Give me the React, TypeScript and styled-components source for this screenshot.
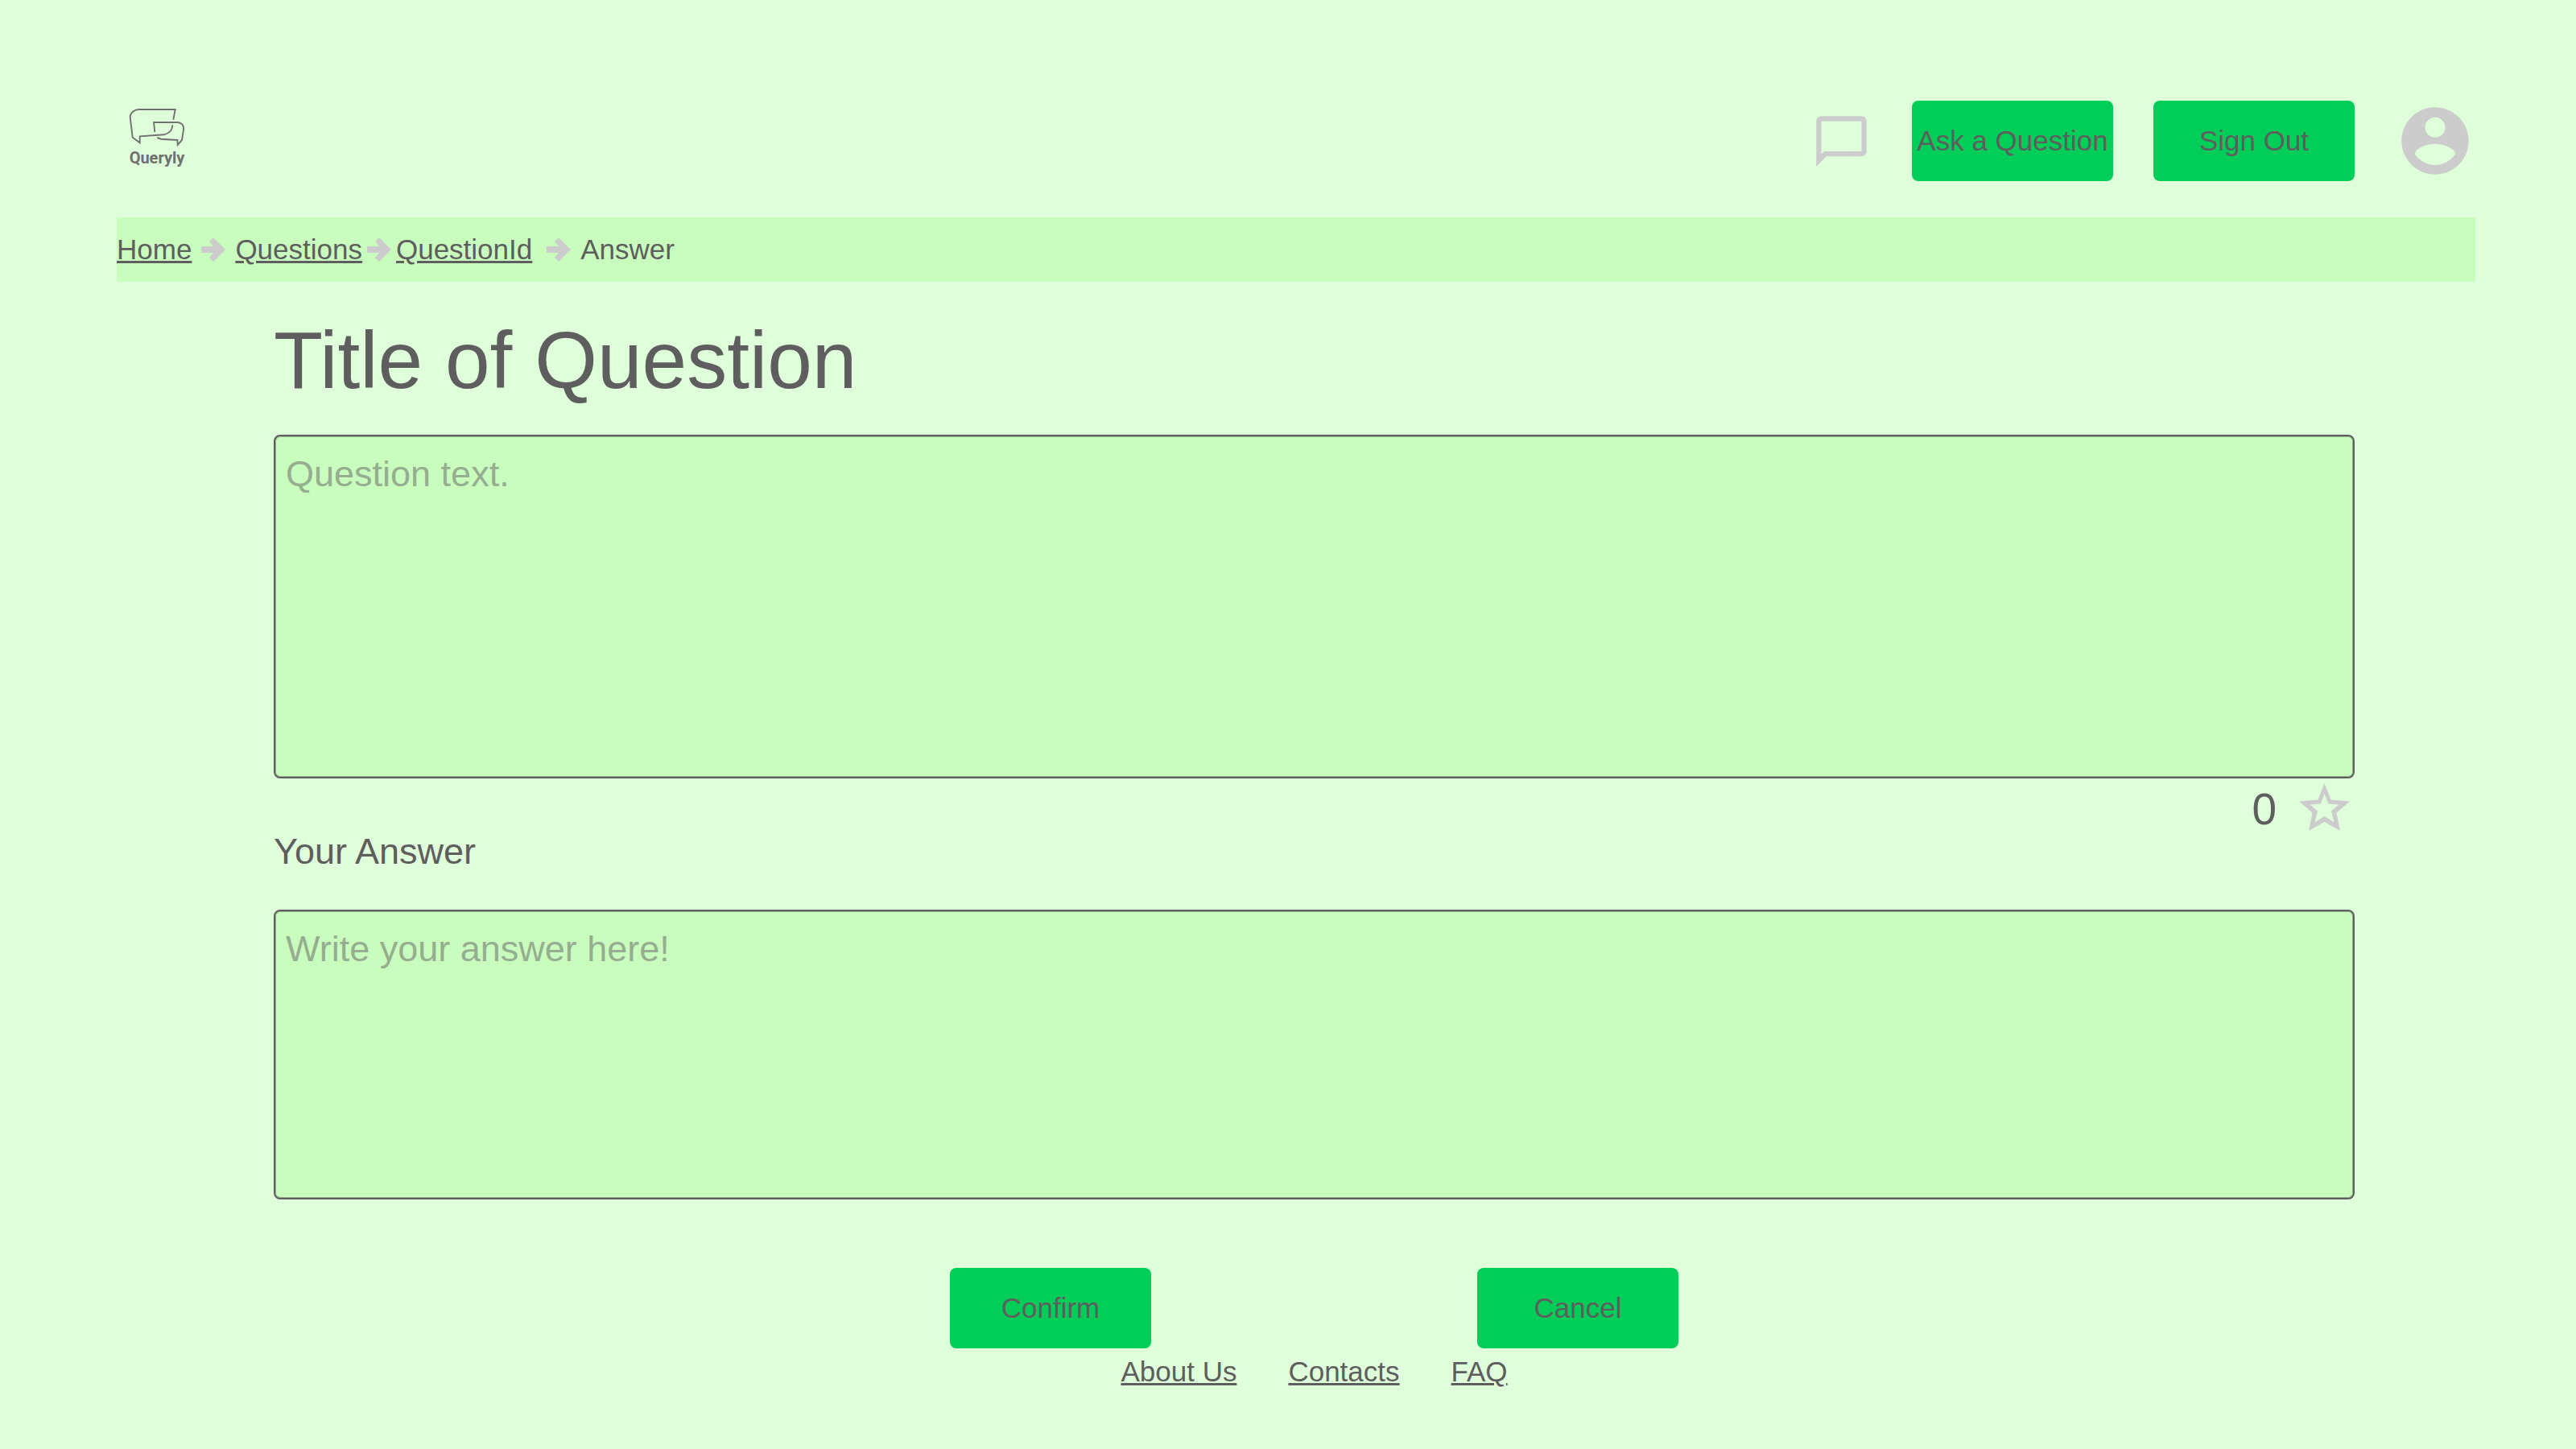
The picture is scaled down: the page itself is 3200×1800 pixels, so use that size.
import React from 'react';
import styled, { createGlobalStyle } from 'styled-components';

const ink = '#5e5e5e';
const panel = '#c9fdbe';
const muted = '#cccccc';

const GlobalStyle = createGlobalStyle`
  * { box-sizing: border-box; }
  body {
    margin: 0;
    background: #dfffda;
    color: ${ink};
    font-family: "Liberation Sans", Arial, sans-serif;
    font-size: 35px;
    line-height: 40px;
  }
`;

const Page = styled.div`
  padding: 125px 125px 60px 145px;
`;

const Header = styled.header`
  display: flex;
  align-items: center;
  gap: 50px;
  height: 100px;
  margin-bottom: 45px;
`;

const Logo = styled.a`
  display: flex;
  flex-direction: column;
  align-items: center;
  width: 100px;
  margin-right: auto;
  padding-bottom: 8px;
  color: #707070;
  font-family: Roboto, sans-serif;
  font-size: 20px;
  font-weight: 700;
  line-height: 24px;
  text-decoration: none;
`;

const IconButton = styled.button`
  display: flex;
  padding: 0;
  border: 0;
  background: none;
  color: ${muted};
`;

const Button = styled.button`
  width: 250px;
  height: 100px;
  padding: 0;
  border: 0;
  border-radius: 8px;
  background: #00ce58;
  color: ${ink};
  font: inherit;
  white-space: nowrap;
`;

const Breadcrumb = styled.nav`
  display: flex;
  align-items: center;
  height: 80px;
  background: ${panel};
`;

const Link = styled.a`
  color: inherit;
  text-decoration: underline;
  text-decoration-thickness: 3px;
`;

const ArrowIcon = styled.svg<{ $before: number; $after: number }>`
  flex: none;
  width: 30px;
  height: 30px;
  margin-left: ${(p) => p.$before}px;
  margin-right: ${(p) => p.$after}px;
  fill: ${muted};
`;

const Main = styled.main`
  padding: 0 150px 0 195px;
`;

const Title = styled.h1`
  margin: 40px 0 35px;
  font-size: 100px;
  font-weight: 400;
  line-height: 115px;
`;

const TextBox = styled.textarea<{ $height: number }>`
  display: block;
  width: 100%;
  height: ${(p) => p.$height}px;
  padding: 21px 13px;
  border: 2px solid ${ink};
  border-radius: 8px;
  background: ${panel};
  box-shadow: inset 0 0 0 1px #94ae8e;
  color: ${ink};
  font: inherit;
  font-size: 45px;
  line-height: 52px;
  resize: none;
  &::placeholder {
    color: #95ae8f;
    opacity: 1;
  }
`;

const Votes = styled.div`
  display: flex;
  justify-content: flex-end;
  align-items: center;
  gap: 22px;
  height: 75px;
  font-size: 55px;
`;

const AnswerLabel = styled.label`
  display: block;
  margin: -10px 0 46px;
  font-size: 45px;
  line-height: 52px;
`;

const Actions = styled.div`
  display: flex;
  justify-content: center;
  gap: 405px;
  margin-top: 85px;
`;

const Footer = styled.footer`
  display: flex;
  justify-content: center;
  gap: 64px;
  padding: 9px 150px 0 195px;
`;

const Arrow = ({ before, after }: { before: number; after: number }) => (
  <ArrowIcon viewBox="0 0 30 30" $before={before} $after={after} aria-hidden="true">
    <path d="M0 11H15L10 5L15 0L30 15L15 30L10 25L15 19H0Z" />
  </ArrowIcon>
);

export default function App() {
  return (
    <>
      <GlobalStyle />
      <Page>
        <Header>
          <Logo href="#">
            <svg width="70" height="50" viewBox="0 0 70 50" fill="none" stroke="currentColor" strokeWidth="1.9">
              <path d="M55.300 14.700L57.700 2H12Q8.500 2 5.500 4.500Q1.300 8 1.700 12L4.700 36.700L13.700 43.300V35.300L43.700 33.300Q49 32 52 28.500Q54.300 25.500 54.300 21.300" />
              <path d="M32.300 30L31 18H60Q63.500 18 65.700 20Q68.500 22.500 68 27L66 40L60.700 46L60.300 40L40 38.700L35.300 37" />
            </svg>
            Queryly
          </Logo>
          <IconButton aria-label="Messages">
            <svg width="75" height="75" viewBox="0 0 24 24" fill="currentColor">
              <path d="M4 4h16v12H5.170L4 17.170V4m0-2c-1.100 0-1.990.9-1.990 2L2 22l4-4h14c1.100 0 2-.9 2-2V4c0-1.100-.9-2-2-2H4z" />
            </svg>
          </IconButton>
          <Button>Ask a Question</Button>
          <Button>Sign Out</Button>
          <IconButton aria-label="Account">
            <svg width="100" height="100" viewBox="0 0 24 24" fill="currentColor">
              <path d="M12 2C6.480 2 2 6.480 2 12s4.480 10 10 10 10-4.480 10-10S17.520 2 12 2zm0 3c1.660 0 3 1.340 3 3s-1.340 3-3 3-3-1.340-3-3 1.340-3 3-3zm0 14.200c-2.500 0-4.710-1.280-6-3.220.03-1.990 4-3.080 6-3.080 1.990 0 5.970 1.090 6 3.080-1.290 1.940-3.500 3.220-6 3.220z" />
            </svg>
          </IconButton>
        </Header>
        <Breadcrumb aria-label="Breadcrumb">
          <Link href="#">Home</Link>
          <Arrow before={12} after={12} />
          <Link href="#">Questions</Link>
          <Arrow before={6} after={6} />
          <Link href="#">QuestionId</Link>
          <Arrow before={18} after={12} />
          <span>Answer</span>
        </Breadcrumb>
        <Main>
          <Title>Title of Question</Title>
          <TextBox $height={427} aria-label="Question" placeholder="Question text." />
          <Votes>
            <span>0</span>
            <IconButton aria-label="Star this question">
              <svg width="75" height="75" viewBox="0 0 75 75" fill="currentColor" fillRule="evenodd">
                <path d="M37.500 6L45.500 26.500L69 28.500L52.500 42.500L57 65L37.500 54L18 65L22.500 42.500L6 28.500L29.500 26.500ZM37.500 19L32.700 31.500L19.500 32.500L29 40.500L25.500 54.500L37.500 47L49.500 54.500L46 40.500L55.500 32.500L42.300 31.500Z" />
              </svg>
            </IconButton>
          </Votes>
          <AnswerLabel htmlFor="answer">Your Answer</AnswerLabel>
          <TextBox id="answer" $height={360} placeholder="Write your answer here!" />
          <Actions>
            <Button>Confirm</Button>
            <Button>Cancel</Button>
          </Actions>
        </Main>
        <Footer>
          <Link href="#">About Us</Link>
          <Link href="#">Contacts</Link>
          <Link href="#">FAQ</Link>
        </Footer>
      </Page>
    </>
  );
}
